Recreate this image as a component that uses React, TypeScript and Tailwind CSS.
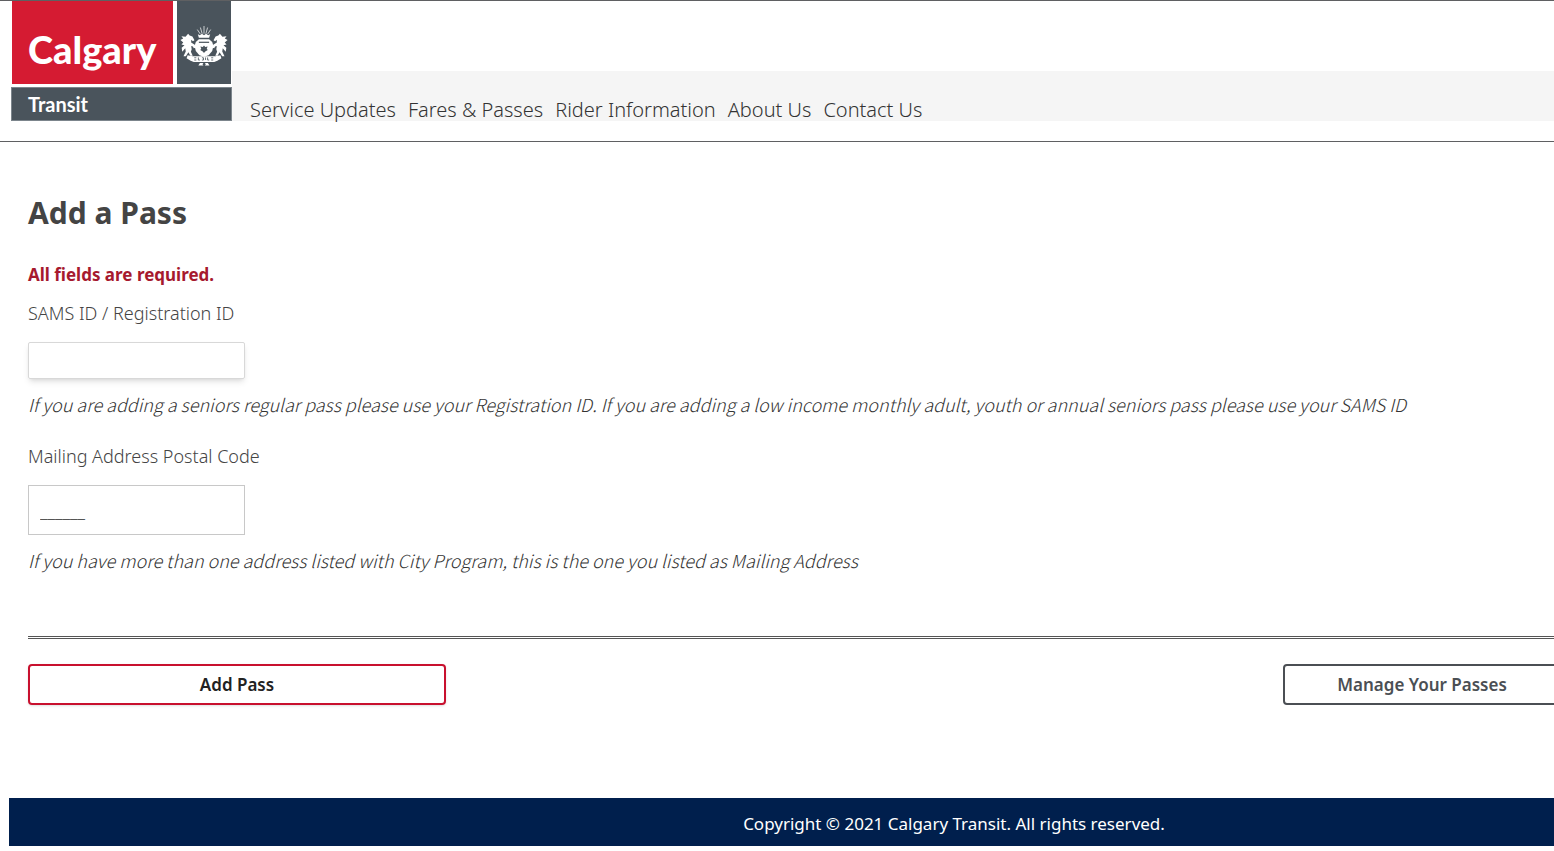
const links = ["Service Updates", "Fares & Passes", "Rider Information", "About Us", "Contact Us"];

function Crest() {
  return (
    <svg viewBox="0 0 46 40" className="h-[41px] w-12" fill="white" aria-hidden="true">
      {/* plumes and crown */}
      <g stroke="white" strokeWidth="0.7" fill="none">
        <path d="M16.500 3.500l3 4.500M19.500 1.500l1.700 6M23 0v7.500M26.500 1.500l-1.700 6M29.500 3.500l-3 4.500" />
      </g>
      <path d="M17 8l2 1 2-1.500 2 1.500 2-1.500 2 1.500 2-1-1 3.500H18z" />
      {/* shield */}
      <path d="M18 13h10l3 2.500 1.200 4-1.200 5-3.500 4-4.500 1.500-4.500-1.500-3.500-4-1.200-5 1.200-4z" />
      <path d="M18 15.300h10v1.200H18z" fill="#4a545c" />
      <path d="M23 19l1.200 1.400 2.300-.4-.8 2.300 1 1.200-2.500 1.300-1.200 1.500-1.200-1.500-2.500-1.300 1-1.200-.8-2.300 2.300.4z" fill="#4a545c" />
      {/* supporters, the right one mirrored */}
      <path id="horse" d="M7.500 7.500l1.500 1.700 2.700 1.100 2 3.700-1.500.8-1.700-1.300 0 2.700 3.500 2 .8 3-1.800.5-.8-1.800-1.700-.5.500 3.300-.8 2.500 1.800 3.800H9.700l-1.900-3.500-2.500 4H3l2.200-4.700-.5-3-2.900 3.200-.6-3.700 2.800-2.600-3-.6 1.800-2.100L0 13.600l2.700-1.500L1 10l4 .5z" />
      <use href="#horse" transform="translate(46 0) scale(-1 1)" />
      {/* ribbon */}
      <path d="M7 28.500l5 1h22l5-1 1 3-4 2.500-3 1H13l-3-1-4-2.500z" />
      <path d="M13.500 31h2M13.500 33.200h2M17.500 30.700v2.500h1.500M21 31h1.500v2.200H21M24.500 30.700v2.500M26.500 30.700v2.500h1.500M30 31h2M30 33.200h2" stroke="#4a545c" strokeWidth="0.8" fill="none" />
      <path d="M19 36h3.500l-1 1.200 1 1.300h-5zM23.800 36h3l1.500 2.500h-4.500l1-1.300z" />
    </svg>
  );
}

function Logo() {
  return (
    <a href="#" className="flex w-[221px] flex-col pt-px font-['Lato',sans-serif] text-white">
      <span className="flex justify-between border-b-3 border-white bg-white px-px">
        <span className="flex h-[83px] w-[161px] items-center bg-[#d51b32] pl-4 pt-3 text-[38px] leading-none font-black">Calgary</span>
        <span className="flex w-[54px] items-center justify-center bg-[#4a545c] pt-2">
          <Crest />
        </span>
      </span>
      <span className="flex h-[34px] items-center border border-[#7c858c] bg-[#4a545c] pl-4 text-xl leading-none font-bold">Transit</span>
    </a>
  );
}

function Header() {
  return (
    <header className="flex border-t border-[#5f6062] pl-[11px]">
      <div className="-mt-px">
        <Logo />
      </div>
      <div className="flex-1 pt-[70px]">
        <nav className="flex h-[50px] items-end gap-3 bg-[#f5f5f5] pl-[18px] text-xl leading-[22px] font-light text-[#333]">
          {links.map((link) => (
            <a key={link} href="#">{link}</a>
          ))}
        </nav>
      </div>
    </header>
  );
}

export default function App() {
  return (
    <div className="overflow-hidden bg-white font-['Noto_Sans','Open_Sans',sans-serif] text-lg leading-6 text-[#444]">
      {/* content runs past the right edge of the window */}
      <div className="w-[calc(100%+354px)]">
        <Header />
        <main className="mt-5 border-t border-[#5f6062] pl-7">
          <h1 className="pt-[51px] text-[30px] leading-10 font-bold">Add a Pass</h1>
          <form onSubmit={(e) => e.preventDefault()}>
            <p className="mt-[30px] text-[17px] font-bold text-[#a6192e]">All fields are required.</p>
            <label htmlFor="sams" className="mt-[14px] block font-light">SAMS ID / Registration ID</label>
            <input id="sams" type="text" className="mt-[17px] block h-[37px] w-[217px] rounded-xs border border-[#d8d8d8] px-3 shadow-md" />
            <p className="mt-[13px] font-['Noto_Sans_CJK_KR',sans-serif] font-light text-[#333] italic">
              If you are adding a seniors regular pass please use your Registration ID. If you are adding a low income monthly adult, youth or annual seniors pass please use your SAMS ID
            </p>
            <label htmlFor="postal" className="mt-7 block font-light">Mailing Address Postal Code</label>
            <input id="postal" type="text" defaultValue="______" className="mt-[17px] block h-[50px] w-[217px] border border-[#c8c8c8] px-[11px] pt-1 pb-1 font-light" />
            <p className="mt-[13px] font-['Noto_Sans_CJK_KR',sans-serif] font-light text-[#333] italic">
              If you have more than one address listed with City Program, this is the one you listed as Mailing Address
            </p>
            <hr className="mt-16 border-t-3 border-double border-[#555]" />
            <div className="mt-[25px] flex justify-between pr-[347px]">
              <button type="submit" className="h-[41px] w-[418px] rounded border-2 border-[#c8102e] text-[17px] font-semibold text-[#222] shadow-sm">Add Pass</button>
              <button type="button" className="h-[41px] w-[278px] rounded border-2 border-[#4b4f54] text-[17px] font-semibold text-[#4b4f54]">Manage Your Passes</button>
            </div>
          </form>
        </main>
        <footer className="mx-[9px] mt-[93px] flex h-12 items-center justify-center bg-[#001f4d] pt-1 text-[17px] text-white">
          Copyright © 2021 Calgary Transit. All rights reserved.
        </footer>
      </div>
    </div>
  );
}
